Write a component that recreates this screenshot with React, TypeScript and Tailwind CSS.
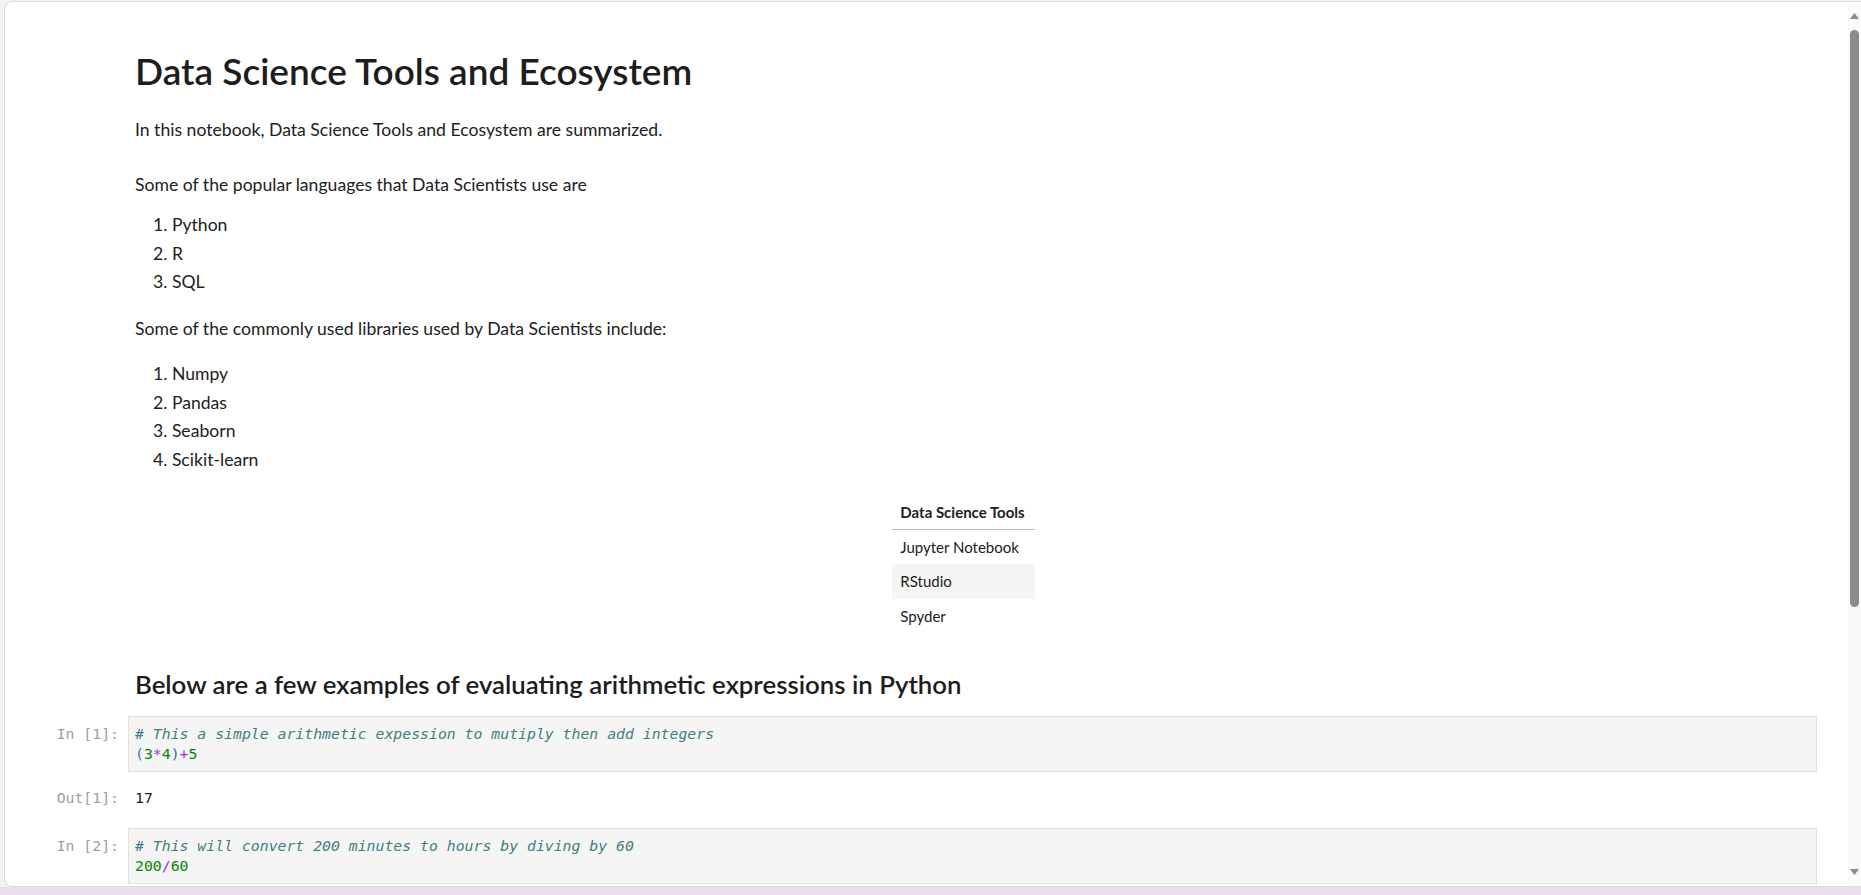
import React from "react";

const sans = "font-['Lato','Open_Sans',sans-serif]";
const mono = "font-['DejaVu_Sans_Mono','Liberation_Mono',monospace]";

function Prompt({ label }: { label: string }) {
  return (
    <div className={`w-[123px] shrink-0 pr-[9px] text-right text-[14.8px] leading-[20px] text-[#a0a0a0] ${mono}`}>
      {label}
    </div>
  );
}

function CodeCell({ label, children }: { label: string; children: React.ReactNode }) {
  return (
    <div className="flex mr-[31px]">
      <div className="pt-[8px]">
        <Prompt label={label} />
      </div>
      <div className={`flex-1 border border-[#e0e0e0] bg-[#f5f5f5] px-[6px] py-[7px] text-[14.8px] leading-[20px] text-[#212121] ${mono}`}>
        {children}
      </div>
    </div>
  );
}

const Cm = ({ children }: { children: React.ReactNode }) => (
  <span className="italic text-[#3d7f7f]">{children}</span>
);
const Num = ({ children }: { children: React.ReactNode }) => (
  <span className="text-[#008800]">{children}</span>
);
const Op = ({ children }: { children: React.ReactNode }) => (
  <span className="text-[#aa22ff]">{children}</span>
);
const Br = ({ children }: { children: React.ReactNode }) => (
  <span className="text-[#3a6fb5]">{children}</span>
);

function Scrollbar() {
  return (
    <div className="w-[13px] shrink-0 bg-[#fafafa] flex flex-col items-center pt-[11px]">
      <svg width="9" height="7" viewBox="0 0 9 7">
        <path d="M4.5 0 L9 6 L0 6 Z" fill="#8a8a8a" />
      </svg>
      <div className="mt-[10px] w-[9px] h-[577px] rounded-full bg-[#8b8b8b]" />
      <div className="flex-1" />
      <svg width="9" height="7" viewBox="0 0 9 7" className="mb-[10px]">
        <path d="M0 0 L9 0 L4.5 6 Z" fill="#8a8a8a" />
      </svg>
    </div>
  );
}

export default function App() {
  const languages = ["Python", "R", "SQL"];
  const libraries = ["Numpy", "Pandas", "Seaborn", "Scikit-learn"];
  const tools = ["Jupyter Notebook", "RStudio", "Spyder"];

  return (
    <div className={`h-[895px] w-full overflow-hidden bg-[#e9e1ea] flex flex-col ${sans}`}>
      <div className="h-[887px] shrink-0 bg-[#f3f3f3] pl-[4px] pt-[1px] flex">
        <div className="flex-1 flex bg-white rounded-tl-[8px] rounded-bl-[8px] border-l border-t border-b border-[#dcdcdc] overflow-hidden">
          <main className="flex-1 flex flex-col pt-[47px] overflow-hidden text-[#212121]">
            {/* Markdown cell */}
            <div className="flex mr-[31px]">
              <div className="w-[123px] shrink-0" />
              <div className="flex-1 pl-[7px] pr-[7px]">
                <h1 className="text-[37px] leading-[44px] font-semibold text-[#1d1d1d]">
                  Data Science Tools and Ecosystem
                </h1>
                <p className="mt-[23px] text-[17.6px] leading-[28px]">
                  In this notebook, Data Science Tools and Ecosystem are summarized.
                </p>
                <p className="mt-[27px] text-[17.6px] leading-[28px]">
                  Some of the popular languages that Data Scientists use are
                </p>
                <ol className="mt-[12px] pl-[18px] text-[17.6px] leading-[28.5px]">
                  {languages.map((l, i) => (
                    <li key={l}>
                      {i + 1}. {l}
                    </li>
                  ))}
                </ol>
                <p className="mt-[18.5px] text-[17.6px] leading-[28px]">
                  Some of the commonly used libraries used by Data Scientists include:
                </p>
                <ol className="mt-[17px] pl-[18px] text-[17.6px] leading-[28.5px]">
                  {libraries.map((l, i) => (
                    <li key={l}>
                      {i + 1}. {l}
                    </li>
                  ))}
                </ol>
                <div className="mt-[21px] flex justify-center pr-[18px]">
                  <table className="text-[15px] border-collapse">
                    <thead>
                      <tr className="border-b border-[#bdbdbd]">
                        <th className="h-[34px] pl-[8px] pr-[10px] text-left font-bold">Data Science Tools</th>
                      </tr>
                    </thead>
                    <tbody>
                      {tools.map((t, i) => (
                        <tr key={t} className={i === 1 ? "bg-[#f5f5f5]" : ""}>
                          <td className="h-[35px] pl-[8px] pr-[10px] text-left">{t}</td>
                        </tr>
                      ))}
                    </tbody>
                  </table>
                </div>
                <h2 className="mt-[34px] text-[25.8px] leading-[32px] font-semibold text-[#1d1d1d]">
                  Below are a few examples of evaluating arithmetic expressions in Python
                </h2>
              </div>
            </div>

            <div className="mt-[16px]">
              <CodeCell label="In [1]:">
                <div>
                  <Cm># This a simple arithmetic expession to mutiply then add integers</Cm>
                </div>
                <div>
                  <Br>(</Br>
                  <Num>3</Num>
                  <Op>*</Op>
                  <Num>4</Num>
                  <Br>)</Br>
                  <Op>+</Op>
                  <Num>5</Num>
                </div>
              </CodeCell>
            </div>

            <div className="mt-[16px] flex mr-[31px]">
              <Prompt label="Out[1]:" />
              <div className={`flex-1 pl-[7px] text-[14.8px] leading-[20px] text-[#212121] ${mono}`}>17</div>
            </div>

            <div className="mt-[20px]">
              <CodeCell label="In [2]:">
                <div>
                  <Cm># This will convert 200 minutes to hours by diving by 60</Cm>
                </div>
                <div>
                  <Num>200</Num>
                  <Op>/</Op>
                  <Num>60</Num>
                </div>
              </CodeCell>
            </div>
          </main>
          <Scrollbar />
        </div>
      </div>
    </div>
  );
}
